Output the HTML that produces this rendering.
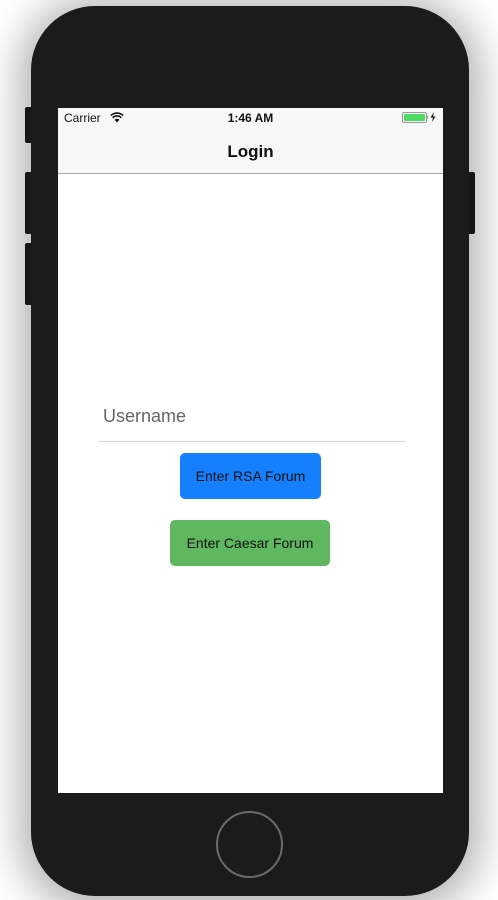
<!DOCTYPE html>
<html><head><meta charset="utf-8"><style>
html,body{margin:0;padding:0;width:498px;height:900px;background:#fff;overflow:hidden;font-family:"Liberation Sans",sans-serif;}
.phone{position:absolute;left:31px;top:6px;width:438px;height:890px;background:#1b1b1b;border-radius:64px;box-shadow:0 4px 40px 12px rgba(0,0,0,0.3);}
.btn{position:absolute;background:#1b1b1b;border-radius:2px;}
.screen{position:absolute;left:58px;top:108px;width:385px;height:685px;background:#fff;overflow:hidden;}
.status{position:absolute;left:0;top:0;width:385px;height:65px;background:#f7f7f7;border-bottom:1px solid #a8a8a8;}
.home{position:absolute;left:216px;top:811px;width:67px;height:67px;border:2px solid #6a6a6a;border-radius:50%;box-sizing:border-box;}
.b{position:absolute;border-radius:5px;color:#111;font-size:14px;text-align:center;}
</style></head><body>
<div class="btn" style="left:25px;top:107px;width:7px;height:36px"></div>
<div class="btn" style="left:25px;top:172px;width:7px;height:62px"></div>
<div class="btn" style="left:25px;top:243px;width:7px;height:62px"></div>
<div class="btn" style="left:468px;top:172px;width:7px;height:62px"></div>
<div class="phone"></div>
<div class="screen">
 <div class="status">
  <div style="position:absolute;left:6px;top:3px;font-size:12px;color:#111">Carrier</div>
  <svg style="position:absolute;left:52px;top:4px" width="14" height="11" viewBox="0 0 14 11"><path d="M7 10.5 L4.6 7.8 A3.4 3.4 0 0 1 9.4 7.8Z" fill="#111"/><path d="M2.7 5.8 A6 6 0 0 1 11.3 5.8" stroke="#111" stroke-width="1.6" fill="none"/><path d="M0.8 3.6 A8.8 8.8 0 0 1 13.2 3.6" stroke="#111" stroke-width="1.6" fill="none"/></svg>
  <div style="position:absolute;left:0;width:385px;top:3px;text-align:center;font-size:12px;font-weight:bold;color:#111">1:46 AM</div>
  <div style="position:absolute;left:344px;top:4px;width:25px;height:11px;border:1px solid #999;border-radius:2px;box-sizing:border-box;padding:1px"><div style="width:100%;height:100%;background:#4cd964;border-radius:1px"></div></div>
  <div style="position:absolute;left:369px;top:8px;width:1px;height:3px;background:#999"></div>
  <svg style="position:absolute;left:372px;top:4px" width="6" height="10" viewBox="0 0 6 10"><path d="M4 0 L0.5 5.5 H3 L2 10 L5.5 4.5 H3Z" fill="#111"/></svg>
  <div style="position:absolute;left:0;width:385px;top:34px;text-align:center;font-size:17px;font-weight:bold;color:#111">Login</div>
 </div>
 <div style="position:absolute;left:45px;top:298px;font-size:18px;color:#666">Username</div>
 <div style="position:absolute;left:40px;top:333px;width:308px;height:1px;background:#d4d4d4"></div>
 <div class="b" style="left:122px;top:345px;width:141px;height:46px;line-height:46px;background:#167ffc">Enter RSA Forum</div>
 <div class="b" style="left:112px;top:412px;width:160px;height:46px;line-height:46px;background:#5fb760">Enter Caesar Forum</div>
</div>
<div class="home"></div>
</body></html>
